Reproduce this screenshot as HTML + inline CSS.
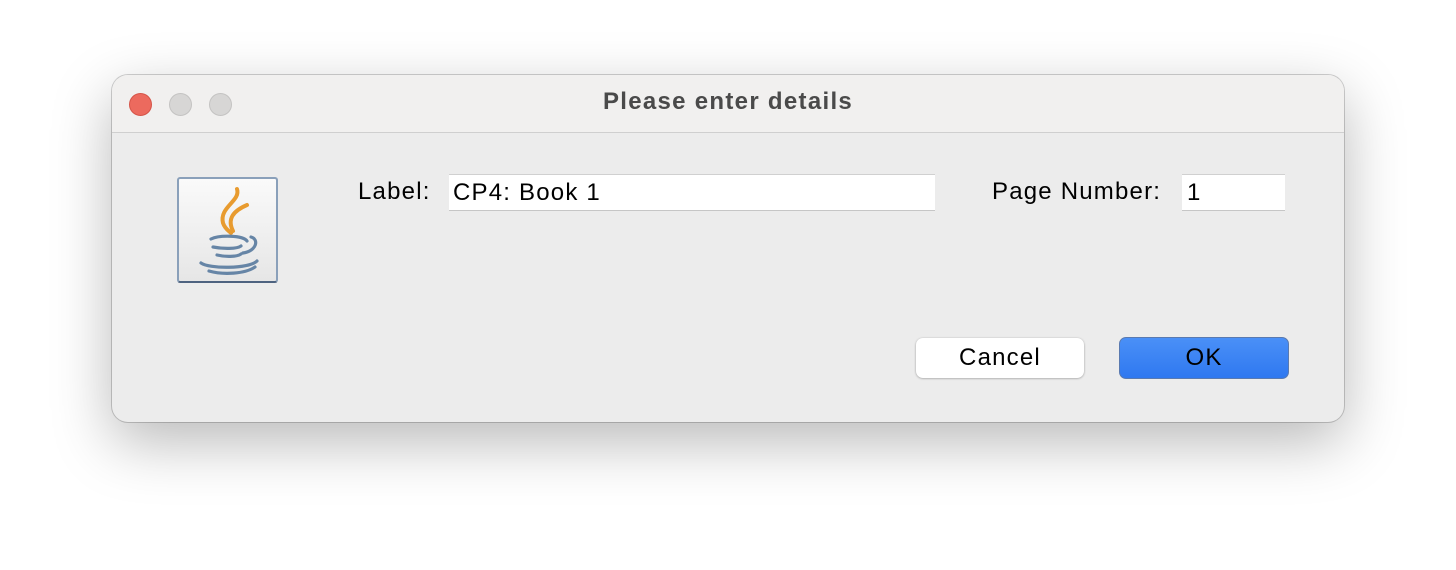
<!DOCTYPE html>
<html><head><style>
body{margin:0;width:1456px;height:570px;background:#fff;position:relative;overflow:hidden;font-family:"Liberation Sans",sans-serif;}
.win{position:absolute;left:112px;top:75px;width:1232px;height:347px;border-radius:16px;background:#ececec;box-shadow:0 20px 60px rgba(0,0,0,0.28),0 0 0 1px rgba(0,0,0,0.18);overflow:hidden;}
.tb{position:absolute;left:0;top:0;width:100%;height:57px;background:#f1f0ef;border-bottom:1px solid #cfcfcf;}
.dot{position:absolute;top:18px;width:23px;height:23px;border-radius:50%;box-sizing:border-box;}
.title{position:absolute;left:0;right:0;top:13px;text-align:center;font-weight:bold;font-size:24px;color:#4a4a4a;letter-spacing:1.3px;}
.t{position:absolute;font-size:24px;color:#000;letter-spacing:1.2px;white-space:nowrap;}
.f{position:absolute;background:#fff;border-top:1px solid #d0d0d0;border-bottom:1px solid #c6c6c6;box-sizing:border-box;}
.btn{position:absolute;box-sizing:border-box;border-radius:7px;font-size:24px;text-align:center;letter-spacing:1.2px;}
</style></head><body>
<div class="win">
<div class="tb">
<div class="dot" style="left:17px;background:#ec6a5e;border:1px solid #d55448"></div>
<div class="dot" style="left:57px;background:#d7d6d5;border:1px solid #c4c3c2"></div>
<div class="dot" style="left:97px;background:#d7d6d5;border:1px solid #c4c3c2"></div>
<div class="title">Please enter details</div>
</div>
<div style="position:absolute;left:65px;top:102px;width:101px;height:106px;box-sizing:border-box;border:2px solid #8aa0ba;border-bottom-color:#4e6380;border-radius:3px;background:linear-gradient(#fafafa,#e6e6e6)">
<svg width="97" height="102" viewBox="0 0 97 102">
<g fill="none" stroke="#e89b2f" stroke-width="4" stroke-linecap="round">
<path d="M58 10 C62 22 40 28 44 44 C46 50 50 52 52 54"/>
<path d="M68 26 C54 32 48 40 54 52"/>
</g>
<g fill="none" stroke="#6685a6" stroke-width="3.2" stroke-linecap="round">
<path d="M32 60 C40 56 64 56 68 62"/>
<path d="M72 58 C80 60 78 72 64 74"/>
<path d="M34 68 C44 70 58 70 62 67"/>
<path d="M38 76 C46 78 58 78 62 75"/>
<path d="M22 84 C30 90 70 90 78 82"/>
<path d="M30 92 C44 96 66 95 76 88"/>
</g>
</svg>
</div>
<div class="t" style="left:246px;top:103px">Label:</div>
<div class="f" style="left:337px;top:99px;width:486px;height:37px"><span class="t" style="left:4px;top:4px">CP4: Book 1</span></div>
<div class="t" style="left:880px;top:103px">Page Number:</div>
<div class="f" style="left:1070px;top:99px;width:103px;height:37px"><span class="t" style="left:5px;top:4px">1</span></div>
<div class="btn" style="left:804px;top:263px;width:168px;height:40px;background:#fff;box-shadow:0 0.5px 2px rgba(0,0,0,0.35);line-height:39px">Cancel</div>
<div class="btn" style="left:1007px;top:262px;width:170px;height:42px;background:linear-gradient(#4a90f7,#2f78f0);border:1px solid #5a7ab0;line-height:39px">OK</div>
</div>
</body></html>
